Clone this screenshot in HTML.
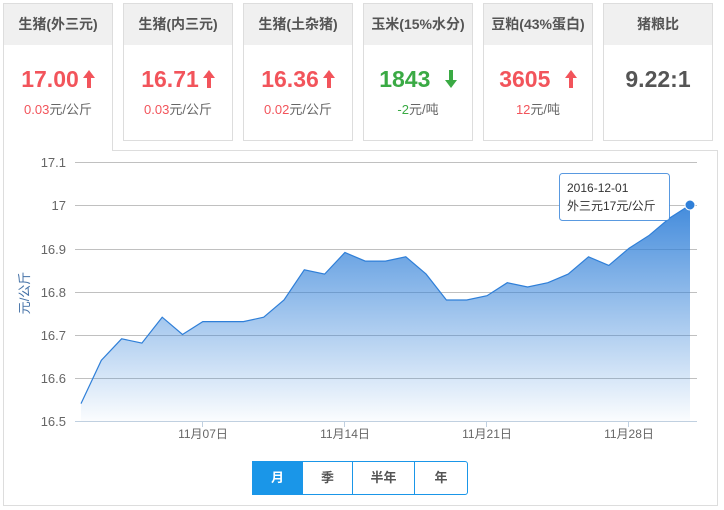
<!DOCTYPE html>
<html><head><meta charset="utf-8"><style>
*{margin:0;padding:0;box-sizing:border-box}
body{width:724px;height:510px;background:#fff;font-family:"Liberation Sans","Noto Sans CJK SC",sans-serif;position:relative;overflow:hidden}
.card{position:absolute;top:3px;width:110px;height:138px;border:1px solid #ddd;background:#fff;text-align:center}
.card .h{height:41px;background:#f0f0f0;font-size:14px;font-weight:bold;color:#555;line-height:41px}
.card .v{font-size:23px;font-weight:bold;margin-top:20px;line-height:28px}
.card .s{font-size:13px;color:#666;margin-top:6px}
.r{color:#f2545b}.g{color:#3aaa44}
.v svg{vertical-align:-1px;margin-left:4px}
.chart{position:absolute;left:3px;top:150px;width:715px;height:356px;border:1px solid #ddd}
.btns{position:absolute;left:252px;top:461px;height:34px;display:flex;border:1px solid #1a96e8;border-radius:0 3px 3px 0}
.btns div{height:32px;line-height:32px;text-align:center;font-size:13px;font-weight:bold;color:#555;border-left:1px solid #1a96e8}
</style></head><body>
<div class="chart"></div>
<div class="card" style="left:3px;height:148px;border-bottom:none;z-index:2"><div class="h">生猪(外三元)</div><div class="v r">17.00<svg width="12" height="18" viewBox="0 0 12 18"><path d="M6 0L12 8H8V18H4V8H0Z" fill="#f2545b"/></svg></div><div class="s"><span class="r">0.03</span>元/公斤</div></div>
<div class="card" style="left:123px"><div class="h">生猪(内三元)</div><div class="v r">16.71<svg width="12" height="18" viewBox="0 0 12 18"><path d="M6 0L12 8H8V18H4V8H0Z" fill="#f2545b"/></svg></div><div class="s"><span class="r">0.03</span>元/公斤</div></div>
<div class="card" style="left:243px"><div class="h">生猪(土杂猪)</div><div class="v r">16.36<svg width="12" height="18" viewBox="0 0 12 18"><path d="M6 0L12 8H8V18H4V8H0Z" fill="#f2545b"/></svg></div><div class="s"><span class="r">0.02</span>元/公斤</div></div>
<div class="card" style="left:363px"><div class="h">玉米(15%水分)</div><div class="v g">1843 <svg width="12" height="18" viewBox="0 0 12 18" style="margin-left:8px"><path d="M6 18L12 10H8V0H4V10H0Z" fill="#3aaa44"/></svg></div><div class="s"><span class="g">-2</span>元/吨</div></div>
<div class="card" style="left:483px"><div class="h">豆粕(43%蛋白)</div><div class="v r">3605 <svg width="12" height="18" viewBox="0 0 12 18" style="margin-left:8px"><path d="M6 0L12 8H8V18H4V8H0Z" fill="#f2545b"/></svg></div><div class="s"><span class="r">12</span>元/吨</div></div>
<div class="card" style="left:603px"><div class="h">猪粮比</div><div class="v" style="color:#555">9.22:1</div></div>
<svg id="sv" style="position:absolute;left:0;top:0" width="724" height="510" font-family="Liberation Sans, Noto Sans CJK SC, sans-serif">
<defs><linearGradient id="gr" x1="0" y1="0" x2="0" y2="1"><stop offset="0" stop-color="#2f7fd8" stop-opacity="0.9"/><stop offset="1" stop-color="#2f7fd8" stop-opacity="0.02"/></linearGradient></defs>
<g stroke="#c0c0c0" stroke-width="1">
<line x1="75" y1="162.5" x2="697" y2="162.5"/><line x1="75" y1="205.5" x2="697" y2="205.5"/><line x1="75" y1="249.5" x2="697" y2="249.5"/><line x1="75" y1="292.5" x2="697" y2="292.5"/><line x1="75" y1="335.5" x2="697" y2="335.5"/><line x1="75" y1="378.5" x2="697" y2="378.5"/>
</g>
<g fill="#666" font-size="13" text-anchor="end">
<text x="66" y="167">17.1</text><text x="66" y="210">17</text><text x="66" y="254">16.9</text><text x="66" y="297">16.8</text><text x="66" y="340">16.7</text><text x="66" y="383">16.6</text><text x="66" y="426">16.5</text>
</g>
<text transform="translate(29,293) rotate(-90)" text-anchor="middle" font-size="13" fill="#4572a7">元/公斤</text>
<path id="area" fill="url(#gr)"/><path id="ln" fill="none" stroke="#2f7fd8" stroke-width="1.2"/>
<line x1="75" y1="421.5" x2="697" y2="421.5" stroke="#c0d0e0"/>
<g stroke="#c0d0e0"><line x1="202.5" y1="421" x2="202.5" y2="427"/><line x1="344.5" y1="421" x2="344.5" y2="427"/><line x1="486.5" y1="421" x2="486.5" y2="427"/><line x1="628.5" y1="421" x2="628.5" y2="427"/></g>
<g fill="#666" font-size="12" text-anchor="middle"><text x="203" y="438">11月07日</text><text x="345" y="438">11月14日</text><text x="487" y="438">11月21日</text><text x="629" y="438">11月28日</text></g>
<circle cx="690" cy="205" r="5" fill="#2f7fd8" stroke="#fff" stroke-width="1"/>
<rect x="559.5" y="173.5" width="110" height="47" rx="3" fill="#fff" stroke="#2f7fd8" stroke-opacity="0.8"/>
<text x="567" y="192" font-size="12" fill="#333">2016-12-01</text><text x="567" y="210" font-size="12" fill="#333">外三元17元/公斤</text>
</svg>
<div class="btns"><div style="width:49px;background:#1a96e8;color:#fff;border-left:none">月</div><div style="width:50px">季</div><div style="width:62px">半年</div><div style="width:53px">年</div></div>
<script>
var v=[16.54,16.64,16.69,16.68,16.74,16.70,16.73,16.73,16.73,16.74,16.78,16.85,16.84,16.89,16.87,16.87,16.88,16.84,16.78,16.78,16.79,16.82,16.81,16.82,16.84,16.88,16.86,16.90,16.93,16.97,17.00];
var d="";v.forEach(function(a,i){var x=81+i*20.3,y=205+(17-a)*431.7;d+=(i?"L":"M")+x.toFixed(1)+" "+y.toFixed(1)});
document.getElementById("ln").setAttribute("d",d);
document.getElementById("area").setAttribute("d",d+"L690 421L81 421Z");
</script>
</body></html>
